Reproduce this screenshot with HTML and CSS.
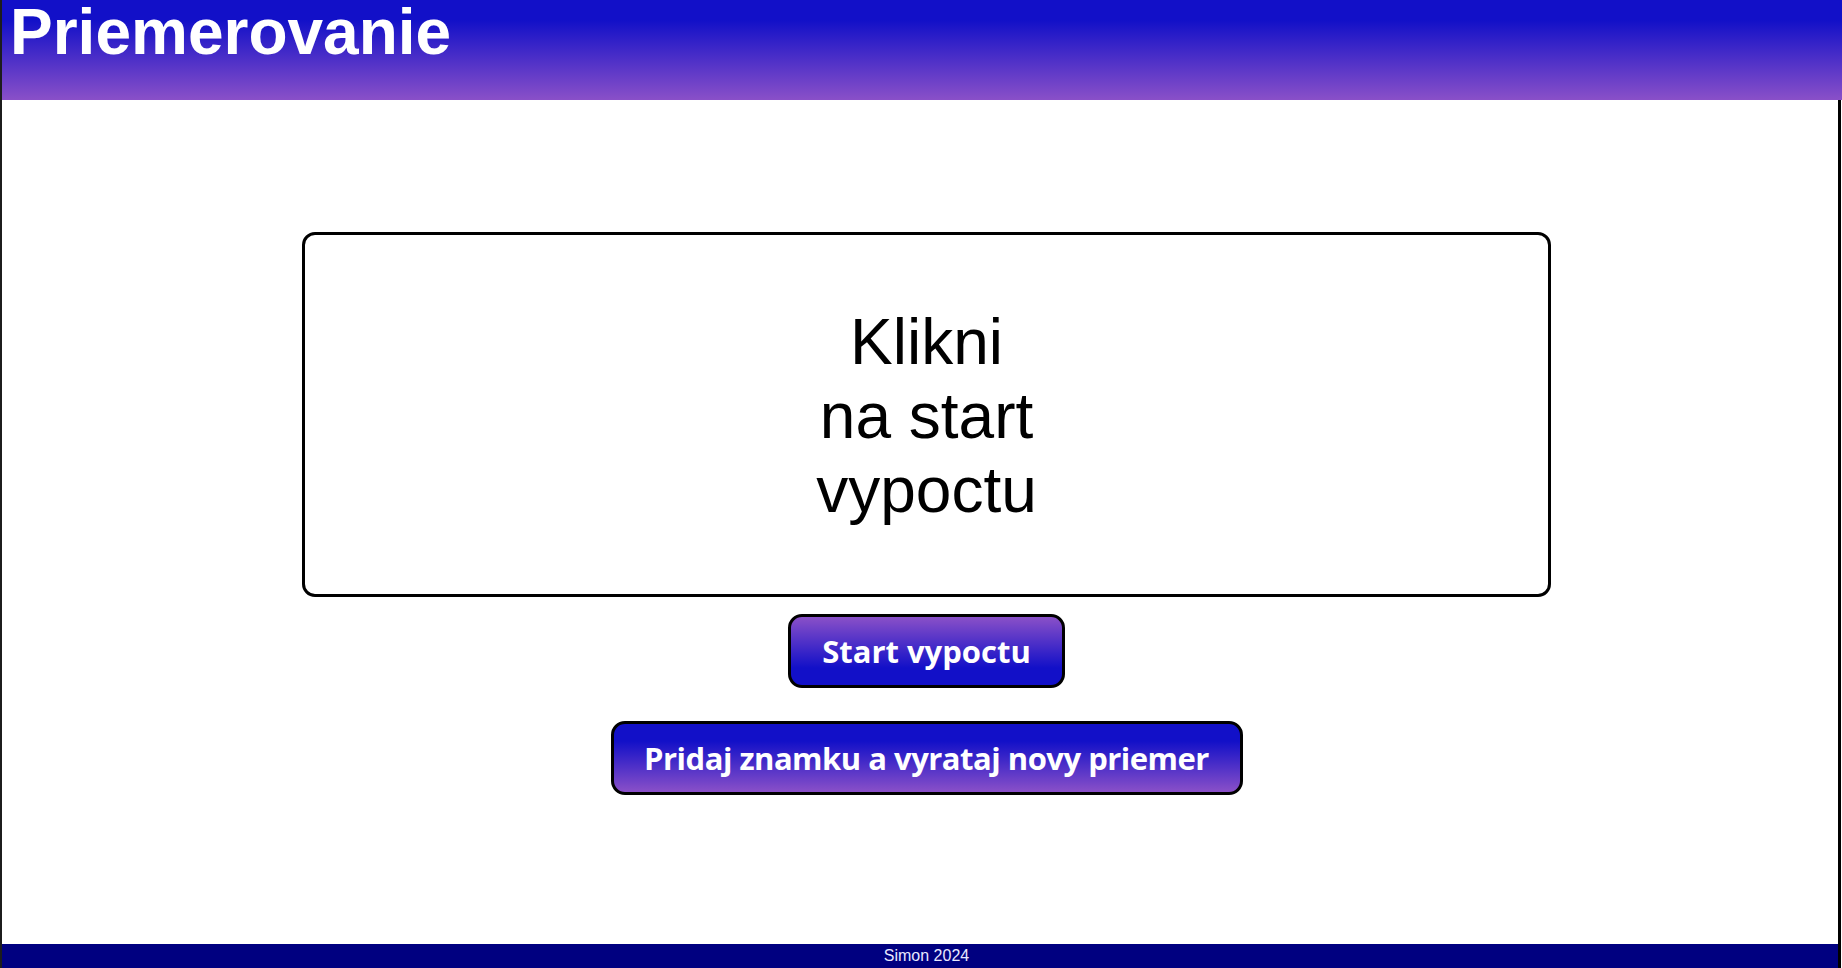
FILE: index.html
```html
<!DOCTYPE html>
<html lang="sk">
<head>
<meta charset="utf-8">
<title>Priemerovanie</title>
<link rel="stylesheet" href="styles.css">
</head>
<body>
<div class="page">
  <header class="top">
    <h1 class="title">Priemerovanie</h1>
  </header>
  <div class="wrap">
    <main class="main">
      <div class="card">
        <p class="card-text">Klikni<br>na start<br>vypoctu</p>
      </div>
      <button class="btn btn-start" type="button">Start vypoctu</button>
      <button class="btn btn-add" type="button">Pridaj znamku a vyrataj novy priemer</button>
    </main>
    <footer class="foot">Simon 2024</footer>
  </div>
</div>
</body>
</html>
```
FILE: styles.css
```css
html, body {
  margin: 0;
  padding: 0;
  height: 100%;
  background: #fff;
}
body {
  font-family: "Liberation Sans", Arial, sans-serif;
  border-left: 2px solid #1c1c1c;
  box-sizing: border-box;
  overflow: hidden;
}
.page {
  display: flex;
  flex-direction: column;
  height: 968px;
}
.top {
  height: 100px;
  flex: none;
  background: linear-gradient(to bottom, #1210c8 0%, #1210c8 20%, #8a50c8 100%);
  padding-left: 8px;
}
.title {
  margin: 0;
  padding-top: 4px;
  color: #fff;
  font-family: "Liberation Sans", Arial, sans-serif;
  font-weight: bold;
  font-size: 64px;
  line-height: 64px;
  height: 64px;
  margin-top: -4px;
}
.wrap {
  flex: 1;
  display: flex;
  flex-direction: column;
  border-right: 3px solid #000;
  margin-right: 1px;
}
.main {
  flex: 1;
  display: flex;
  flex-direction: column;
  align-items: center;
  padding-left: 13px;
  padding-top: 132px;
}
.card {
  box-sizing: border-box;
  width: 1249px;
  height: 365px;
  border: 3px solid #000;
  border-radius: 13px;
  padding-top: 70px;
  text-align: center;
}
.card-text {
  margin: 0;
  font-size: 64px;
  color: #000;
}
.btn {
  box-sizing: border-box;
  height: 74px;
  border: 3px solid #000;
  border-radius: 14px;
  color: #fff;
  font-family: "Open Sans", "Noto Sans", sans-serif;
  font-weight: bold;
  font-size: 31px;
  padding: 0;
  white-space: nowrap;
  cursor: pointer;
}
.btn-start {
  width: 277px;
  margin-top: 17px;
  background: linear-gradient(to bottom, #8a50c8 0%, #1210c8 75%, #1210c8 100%);
}
.btn-add {
  width: 632px;
  margin-top: 33px;
  letter-spacing: -0.5px;
  background: linear-gradient(to bottom, #1210c8 0%, #1210c8 25%, #8a50c8 100%);
}
.foot {
  height: 24px;
  flex: none;
  background: #000080;
  color: #e8e8ff;
  font-size: 16px;
  line-height: 24px;
  text-align: center;
  padding-left: 13px;
}
```
